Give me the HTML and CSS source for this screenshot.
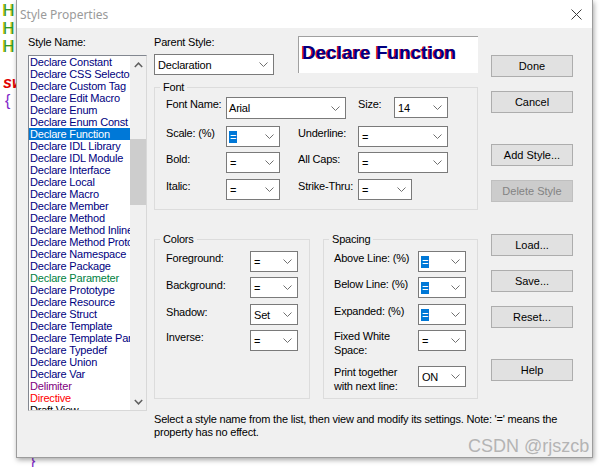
FILE: index.html
```html
<!DOCTYPE html>
<html>
<head>
<meta charset="utf-8">
<title>Style Properties</title>
<link rel="stylesheet" href="styles.css">
</head>
<body>
<div class="code">
  <div class="code-line code-h">H</div>
  <div class="code-line code-h">H</div>
  <div class="code-line code-h">H</div>
  <div class="code-line"></div>
  <div class="code-line code-kw">sw</div>
  <div class="code-line code-brace">{</div>
  <div class="code-gap"></div>
  <div class="code-line code-tail">}</div>
</div>

<div class="dialog">
  <div class="titlebar">
    <span class="title">Style Properties</span>
    <svg class="close" width="11" height="11" viewBox="0 0 11 11"><path d="M0.5 0.5 L10.5 10.5 M10.5 0.5 L0.5 10.5" stroke="#3c3c3c" stroke-width="1" fill="none"/></svg>
  </div>
  <div class="client">
    <div class="col-left">
      <div class="lbl">Style Name:</div>
      <div class="listbox">
        <div class="list-items">
          <div class="item">Declare Constant</div>
          <div class="item">Declare CSS Selector</div>
          <div class="item">Declare Custom Tag</div>
          <div class="item">Declare Edit Macro</div>
          <div class="item">Declare Enum</div>
          <div class="item">Declare Enum Const</div>
          <div class="item selected">Declare Function</div>
          <div class="item">Declare IDL Library</div>
          <div class="item">Declare IDL Module</div>
          <div class="item">Declare Interface</div>
          <div class="item">Declare Local</div>
          <div class="item">Declare Macro</div>
          <div class="item">Declare Member</div>
          <div class="item">Declare Method</div>
          <div class="item">Declare Method Inline</div>
          <div class="item">Declare Method Prototype</div>
          <div class="item">Declare Namespace</div>
          <div class="item">Declare Package</div>
          <div class="item green">Declare Parameter</div>
          <div class="item">Declare Prototype</div>
          <div class="item">Declare Resource</div>
          <div class="item">Declare Struct</div>
          <div class="item">Declare Template</div>
          <div class="item">Declare Template Param</div>
          <div class="item">Declare Typedef</div>
          <div class="item">Declare Union</div>
          <div class="item">Declare Var</div>
          <div class="item purple">Delimiter</div>
          <div class="item red">Directive</div>
          <div class="item black">Draft View</div>
        </div>
        <div class="vscroll">
          <div class="sb-btn"><svg width="9" height="6" viewBox="0 0 9 6"><path d="M0.8 5 L4.5 1.2 L8.2 5" stroke="#606060" stroke-width="1.5" fill="none"/></svg></div>
          <div class="sb-track"><div class="sb-thumb" style="margin-top:66px;height:66px"></div></div>
          <div class="sb-btn"><svg width="9" height="6" viewBox="0 0 9 6"><path d="M0.8 1 L4.5 4.8 L8.2 1" stroke="#606060" stroke-width="1.5" fill="none"/></svg></div>
        </div>
      </div>
    </div>

    <div class="col-mid">
      <div class="top-row">
        <div class="parent">
          <div class="lbl">Parent Style:</div>
          <div class="combo w120">Declaration<svg class="chev" width="9" height="5" viewBox="0 0 9 5"><path d="M0.5 0.5 L4.5 4.5 L8.5 0.5" stroke="#707070" fill="none"/></svg></div>
        </div>
        <div class="preview">Declare Function</div>
      </div>

      <div class="group font-group">
        <div class="legend">Font</div>
        <div class="fg-rows">
          <div class="fg-row">
            <span class="lbl l60">Font Name:</span>
            <div class="combo w120 arial">Arial<svg class="chev" width="9" height="5" viewBox="0 0 9 5"><path d="M0.5 0.5 L4.5 4.5 L8.5 0.5" stroke="#707070" fill="none"/></svg></div>
            <span class="lbl l-size">Size:</span>
            <div class="combo w54">14<svg class="chev" width="9" height="5" viewBox="0 0 9 5"><path d="M0.5 0.5 L4.5 4.5 L8.5 0.5" stroke="#707070" fill="none"/></svg></div>
          </div>
          <div class="fg-row">
            <span class="lbl l60">Scale: (%)</span>
            <div class="combo w54"><span class="hl">=</span><svg class="chev" width="9" height="5" viewBox="0 0 9 5"><path d="M0.5 0.5 L4.5 4.5 L8.5 0.5" stroke="#707070" fill="none"/></svg></div>
            <span class="lbl l60 second">Underline:</span>
            <div class="combo w90">=<svg class="chev" width="9" height="5" viewBox="0 0 9 5"><path d="M0.5 0.5 L4.5 4.5 L8.5 0.5" stroke="#707070" fill="none"/></svg></div>
          </div>
          <div class="fg-row">
            <span class="lbl l60">Bold:</span>
            <div class="combo w54">=<svg class="chev" width="9" height="5" viewBox="0 0 9 5"><path d="M0.5 0.5 L4.5 4.5 L8.5 0.5" stroke="#707070" fill="none"/></svg></div>
            <span class="lbl l60 second">All Caps:</span>
            <div class="combo w90">=<svg class="chev" width="9" height="5" viewBox="0 0 9 5"><path d="M0.5 0.5 L4.5 4.5 L8.5 0.5" stroke="#707070" fill="none"/></svg></div>
          </div>
          <div class="fg-row">
            <span class="lbl l60">Italic:</span>
            <div class="combo w54">=<svg class="chev" width="9" height="5" viewBox="0 0 9 5"><path d="M0.5 0.5 L4.5 4.5 L8.5 0.5" stroke="#707070" fill="none"/></svg></div>
            <span class="lbl l60 second">Strike-Thru:</span>
            <div class="combo w54">=<svg class="chev" width="9" height="5" viewBox="0 0 9 5"><path d="M0.5 0.5 L4.5 4.5 L8.5 0.5" stroke="#707070" fill="none"/></svg></div>
          </div>
        </div>
      </div>

      <div class="group-row">
        <div class="group colors">
          <div class="legend">Colors</div>
          <div class="g-rows">
            <div class="g-row h26"><span class="lbl l84">Foreground:</span><div class="combo w48">=<svg class="chev" width="9" height="5" viewBox="0 0 9 5"><path d="M0.5 0.5 L4.5 4.5 L8.5 0.5" stroke="#707070" fill="none"/></svg></div></div>
            <div class="g-row h27"><span class="lbl l84 lo">Background:</span><div class="combo w48">=<svg class="chev" width="9" height="5" viewBox="0 0 9 5"><path d="M0.5 0.5 L4.5 4.5 L8.5 0.5" stroke="#707070" fill="none"/></svg></div></div>
            <div class="g-row h26"><span class="lbl l84 lo">Shadow:</span><div class="combo w48">Set<svg class="chev" width="9" height="5" viewBox="0 0 9 5"><path d="M0.5 0.5 L4.5 4.5 L8.5 0.5" stroke="#707070" fill="none"/></svg></div></div>
            <div class="g-row h21"><span class="lbl l84">Inverse:</span><div class="combo w48">=<svg class="chev" width="9" height="5" viewBox="0 0 9 5"><path d="M0.5 0.5 L4.5 4.5 L8.5 0.5" stroke="#707070" fill="none"/></svg></div></div>
          </div>
        </div>
        <div class="group spacing">
          <div class="legend">Spacing</div>
          <div class="g-rows">
            <div class="g-row h26"><span class="lbl l84">Above Line: (%)</span><div class="combo w48"><span class="hl">=</span><svg class="chev" width="9" height="5" viewBox="0 0 9 5"><path d="M0.5 0.5 L4.5 4.5 L8.5 0.5" stroke="#707070" fill="none"/></svg></div></div>
            <div class="g-row h27"><span class="lbl l84">Below Line: (%)</span><div class="combo w48"><span class="hl">=</span><svg class="chev" width="9" height="5" viewBox="0 0 9 5"><path d="M0.5 0.5 L4.5 4.5 L8.5 0.5" stroke="#707070" fill="none"/></svg></div></div>
            <div class="g-row h26"><span class="lbl l84">Expanded: (%)</span><div class="combo w48"><span class="hl">=</span><svg class="chev" width="9" height="5" viewBox="0 0 9 5"><path d="M0.5 0.5 L4.5 4.5 L8.5 0.5" stroke="#707070" fill="none"/></svg></div></div>
            <div class="g-row h36"><span class="lbl l84 two">Fixed White<br>Space:</span><div class="combo w48">=<svg class="chev" width="9" height="5" viewBox="0 0 9 5"><path d="M0.5 0.5 L4.5 4.5 L8.5 0.5" stroke="#707070" fill="none"/></svg></div></div>
            <div class="g-row h21"><span class="lbl l84 two">Print together<br>with next line:</span><div class="combo w48">ON<svg class="chev" width="9" height="5" viewBox="0 0 9 5"><path d="M0.5 0.5 L4.5 4.5 L8.5 0.5" stroke="#707070" fill="none"/></svg></div></div>
          </div>
        </div>
      </div>

      <p class="hint">Select a style name from the list, then view and modify its settings. Note: '=' means the<br>property has no effect.</p>
    </div>

    <div class="col-right">
      <div class="btn-group">
        <div class="btn">Done</div>
        <div class="btn">Cancel</div>
      </div>
      <div class="btn-group">
        <div class="btn">Add Style...</div>
        <div class="btn disabled">Delete Style</div>
      </div>
      <div class="btn-group g3">
        <div class="btn">Load...</div>
        <div class="btn">Save...</div>
        <div class="btn">Reset...</div>
      </div>
      <div class="btn-group">
        <div class="btn">Help</div>
      </div>
    </div>
  </div>
</div>

<div class="watermark">CSDN @rjszcb</div>
</body>
</html>
```

FILE: styles.css
```css
* { box-sizing: border-box; }
html, body { margin: 0; padding: 0; }
body {
  width: 606px;
  height: 467px;
  overflow: hidden;
  position: relative;
  background: #ffffff;
  font-family: "Liberation Sans", Arial, sans-serif;
  font-size: 11px;
  color: #000;
}

/* editor text behind the dialog */
.code {
  padding: 2px 0 0 3px;
  font-family: "Liberation Sans", Arial, sans-serif;
  font-size: 16px;
  line-height: 18px;
}
.code-line { height: 18px; white-space: pre; }
.code-h { color: #2e9a2e; text-shadow: -1px 0 0 #c8c800; }
.code-kw { color: #e00000; font-weight: bold; font-style: italic; }
.code-brace { color: #8028c8; padding-left: 2px; }
.code-gap { height: 342px; }
.code-tail { color: #8028c8; padding-left: 27px; }

/* dialog window */
.dialog {
  position: absolute;
  left: 16px;
  top: 0;
  width: 577px;
  height: 458px;
  border: 1px solid #9c9c9c;
  border-top: 0;
  background: #f0f0f0;
  box-shadow: 1px 2px 5px rgba(0, 0, 0, 0.35);
  display: flex;
  flex-direction: column;
}
.titlebar {
  height: 28px;
  flex: none;
  background: #ffffff;
  display: flex;
  align-items: center;
  padding-left: 3px;
}
.title {
  font-family: "Noto Sans", "Liberation Sans", sans-serif;
  font-size: 12px;
  color: #9a9a9a;
}
.close { margin-left: auto; margin-right: 10px; }

.client {
  flex: 1;
  display: flex;
  align-items: flex-start;
  padding: 8px 19px 0 11px;
  letter-spacing: -0.2px;
}

.lbl { line-height: 13px; white-space: nowrap; }

/* left column: list */
.col-left { width: 119px; flex: none; }
.listbox {
  margin-top: 6px;
  height: 356px;
  border: 1px solid #828790;
  border-right-color: #d8d8d8;
  border-bottom-color: #d8d8d8;
  background: #fff;
  display: flex;
}
.list-items { width: 101px; overflow: hidden; }
.item {
  height: 12px;
  line-height: 12px;
  padding-left: 1px;
  white-space: nowrap;
  overflow: hidden;
  color: #000080;
}
.item.selected { background: #0078d7; color: #fff; }
.item.green { color: #007f3f; }
.item.purple { color: #800080; }
.item.red { color: #ff0000; }
.item.black { color: #000; }

.vscroll {
  width: 16px;
  background: #f0f0f0;
  display: flex;
  flex-direction: column;
}
.sb-btn {
  height: 17px;
  flex: none;
  display: flex;
  align-items: center;
  justify-content: center;
}
.sb-track { flex: 1; }
.sb-thumb { background: #cdcdcd; }

/* middle column */
.col-mid { width: 324px; flex: none; margin-left: 7px; }
.top-row { display: flex; align-items: flex-start; }
.parent { width: 119px; }
.parent .combo { margin-top: 5px; }
.preview {
  margin-left: 25px;
  width: 180px;
  height: 37px;
  background: #fff;
  border-top: 1px solid #a0a0a0;
  border-left: 1px solid #a0a0a0;
  padding: 5px 0 0 3px;
  font-family: "Liberation Sans", Arial, sans-serif;
  font-weight: bold;
  font-size: 19px;
  line-height: 22px;
  letter-spacing: 0;
  color: #000080;
  text-shadow: -1px 0 0 #e00000;
  white-space: nowrap;
}

.combo {
  height: 21px;
  border: 1px solid #7a7a7a;
  background: #fff;
  display: flex;
  align-items: center;
  padding-left: 3px;
  flex: none;
}
.combo.arial { height: 22px; padding-left: 2px; }
.chev { margin-left: auto; margin-right: 5px; flex: none; }
.w120 { width: 120px; }
.w90 { width: 90px; }
.w54 { width: 54px; }
.w48 { width: 48px; }
.hl {
  background: #0078d7;
  color: #fff;
  margin-left: -1px;
  padding: 0 1px;
  line-height: 12px;
}

.group {
  border: 1px solid #dcdcdc;
}
.legend {
  width: fit-content;
  margin: -7px 0 0 5px;
  padding: 0 3px;
  background: #f0f0f0;
  line-height: 13px;
}
.font-group { margin-top: 12px; }
.fg-rows {
  margin-top: 3px;
  padding: 0 0 9px 11px;
  display: grid;
  grid-template-rows: 29px 26px 27px 21px;
}
.fg-row { display: flex; align-items: flex-start; }
.fg-row .lbl { padding-top: 1px; }
.l60 { width: 60px; flex: none; }
.l84 { width: 84px; flex: none; }
.second { margin-left: 18px; }
.l-size { margin-left: 12px; width: 36px; padding-top: 2px; }

.group-row { display: flex; gap: 13px; margin-top: 29px; }
.colors { width: 156px; height: 160px; }
.spacing { width: 155px; height: 160px; }
.g-rows { margin-top: 5px; padding-left: 11px; }
.spacing .g-rows { padding-left: 10px; }
.g-row { display: flex; align-items: flex-start; }
.g-row .lbl { padding-top: 1px; }
.g-row .lbl.lo { padding-top: 2px; }
.g-row .lbl.two { padding-top: 0; line-height: 13.5px; }
.h26 { height: 26px; }
.h27 { height: 27px; }
.h21 { height: 21px; }
.h36 { height: 36px; }

.hint {
  margin: 14px 0 0 0;
  width: 430px;
  line-height: 13px;
  white-space: nowrap;
}

/* right column: buttons */
.col-right {
  width: 82px;
  flex: none;
  margin-left: 13px;
  margin-top: 19px;
  display: flex;
  flex-direction: column;
  gap: 31px;
}
.btn-group { display: flex; flex-direction: column; gap: 14px; }
.btn-group.g3 { margin-top: 1px; }
.btn {
  height: 22px;
  border: 1px solid #adadad;
  background: #e1e1e1;
  display: flex;
  align-items: center;
  justify-content: center;
  letter-spacing: 0;
}
.btn.disabled {
  background: #cccccc;
  border-color: #bfbfbf;
  color: #838383;
}

.watermark {
  position: absolute;
  left: 468px;
  top: 436px;
  font-family: "Liberation Sans", Arial, sans-serif;
  font-size: 18px;
  line-height: 21px;
  color: #b4b4b4;
  white-space: nowrap;
}
```
